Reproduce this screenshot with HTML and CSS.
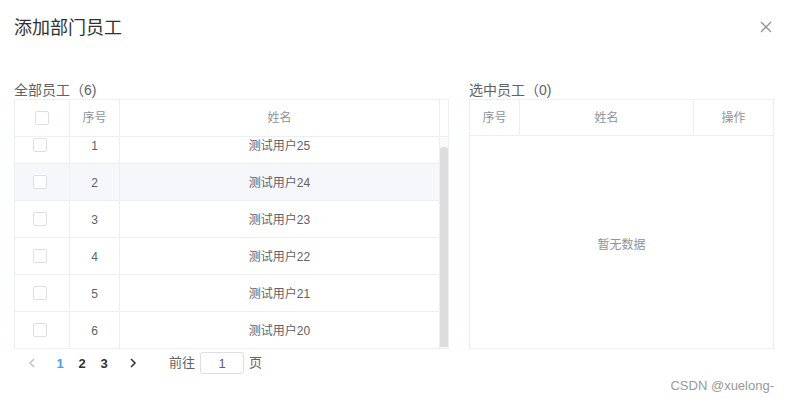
FILE: index.html
```html
<!DOCTYPE html>
<html lang="zh">
<head>
<meta charset="utf-8">
<title>添加部门员工</title>
<link rel="stylesheet" href="styles.css">
</head>
<body>
<div class="dialog">
  <header class="dlg-head">
    <h1 class="dlg-title">添加部门员工</h1>
    <button class="close" aria-label="关闭">
      <svg width="12" height="12" viewBox="0 0 12 12"><path d="M1 1L11 11M11 1L1 11" stroke="#909399" stroke-width="1.3" fill="none"/></svg>
    </button>
  </header>
  <div class="panels">
    <section class="panel left">
      <div class="panel-title">全部员工（6)</div>
      <div class="tbl">
        <div class="thead lt">
          <div class="th"><span class="cb"></span></div>
          <div class="th">序号</div>
          <div class="th">姓名</div>
          <div class="th gutter"></div>
        </div>
        <div class="tbody">
          <div class="rows">
            <div class="tr"><div class="td ck"><span class="cb"></span></div><div class="td">1</div><div class="td">测试用户25</div></div>
            <div class="tr hover"><div class="td ck"><span class="cb"></span></div><div class="td">2</div><div class="td">测试用户24</div></div>
            <div class="tr"><div class="td ck"><span class="cb"></span></div><div class="td">3</div><div class="td">测试用户23</div></div>
            <div class="tr"><div class="td ck"><span class="cb"></span></div><div class="td">4</div><div class="td">测试用户22</div></div>
            <div class="tr"><div class="td ck"><span class="cb"></span></div><div class="td">5</div><div class="td">测试用户21</div></div>
            <div class="tr"><div class="td ck"><span class="cb"></span></div><div class="td">6</div><div class="td">测试用户20</div></div>
          </div>
          <div class="scrollbar"><div class="thumb"></div></div>
        </div>
      </div>
      <nav class="pager">
        <span class="pg prev">
          <svg width="8" height="10" viewBox="0 0 8 10"><path d="M6 1L2 5L6 9" stroke="#C0C4CC" stroke-width="1.5" fill="none"/></svg>
        </span>
        <span class="pg num active">1</span>
        <span class="pg num">2</span>
        <span class="pg num">3</span>
        <span class="pg next">
          <svg width="8" height="10" viewBox="0 0 8 10"><path d="M2 1L6 5L2 9" stroke="#303133" stroke-width="1.5" fill="none"/></svg>
        </span>
        <span class="jump">前往</span>
        <span class="jump-input">1</span>
        <span class="jump-end">页</span>
      </nav>
    </section>
    <section class="panel right">
      <div class="panel-title">选中员工（0)</div>
      <div class="tbl">
        <div class="thead rt">
          <div class="th">序号</div>
          <div class="th">姓名</div>
          <div class="th">操作</div>
        </div>
        <div class="empty">暂无数据</div>
      </div>
    </section>
  </div>
  <div class="watermark">CSDN @xuelong-</div>
</div>
</body>
</html>
```
FILE: styles.css
```css
* { box-sizing: border-box; }
html, body { margin: 0; padding: 0; background: #fff; }
body {
  width: 789px;
  height: 402px;
  overflow: hidden;
  font-family: "Liberation Sans", "Noto Sans CJK SC", sans-serif;
  color: #606266;
}
.dialog { position: relative; width: 789px; height: 402px; }
.dlg-head {
  height: 56px;
  display: flex;
  align-items: center;
  justify-content: space-between;
  padding: 0 17px 0 14px;
}
.dlg-title {
  margin: 0;
  font-size: 18px;
  font-weight: normal;
  line-height: 24px;
  color: #303133;
}
.close {
  border: 0;
  background: none;
  padding: 0;
  width: 12px;
  height: 12px;
  display: flex;
  margin-top: -2px;
}
.panels {
  display: flex;
  gap: 20px;
  padding: 25px 16px 0 14px;
}
.panel.left { width: 435px; }
.panel.right { width: 305px; }
.panel-title {
  font-size: 14px;
  line-height: 18px;
  height: 18px;
  color: #606266;
}
.tbl {
  border: 1px solid #EBEEF5;
  font-size: 12px;
}
.thead {
  display: grid;
  border-bottom: 1px solid #EBEEF5;
  color: #909399;
}
.thead.lt { grid-template-columns: 55px 50px 320px 8px; height: 37px; }
.thead.rt { grid-template-columns: 50px 174px 79px; height: 36px; }
.th {
  display: flex;
  align-items: center;
  justify-content: center;
  border-right: 1px solid #EBEEF5;
  line-height: 16px;
}
.th:last-child { border-right: 0; }
.cb {
  display: block;
  width: 14px;
  height: 14px;
  border: 1px solid #DCDFE6;
  border-radius: 2px;
  background: #fff;
}
.tbody {
  display: flex;
  height: 211px;
}
.rows {
  width: 425px;
  display: flex;
  flex-direction: column;
  justify-content: flex-end;
  overflow: hidden;
}
.tr {
  flex: none;
  display: grid;
  grid-template-columns: 55px 50px 320px;
  height: 37px;
  border-bottom: 1px solid #EBEEF5;
}
.tr:last-child { border-bottom: 0; height: 36px; }
.tr.hover { background: #F5F7FA; }
.td {
  display: flex;
  align-items: center;
  justify-content: center;
  border-right: 1px solid #EBEEF5;
  line-height: 16px;
  padding-top: 1px;
  color: #606266;
}
.td.ck { padding-right: 4px; padding-top: 0; }
.scrollbar {
  width: 8px;
  background: #fafafa;
  padding-top: 10px;
}
.thumb {
  width: 8px;
  height: 200px;
  background: #dddddd;
  border-radius: 3px 3px 0 0;
}
.empty {
  height: 212px;
  display: flex;
  align-items: center;
  justify-content: center;
  color: #909399;
  font-size: 12px;
  padding-top: 2px;
}
.pager {
  display: flex;
  align-items: center;
  height: 24px;
  margin-top: 2px;
  font-size: 13px;
}
.pg {
  display: flex;
  align-items: center;
  justify-content: center;
  height: 24px;
}
.prev { width: 35px; }
.num { width: 22px; font-weight: bold; color: #303133; }
.num.active { color: #409EFF; }
.next { width: 36px; }
.jump { margin-left: 18px; color: #606266; line-height: 16px; }
.jump-input {
  margin-left: 5px;
  width: 44px;
  height: 22px;
  border: 1px solid #DCDFE6;
  border-radius: 3px;
  display: flex;
  align-items: center;
  justify-content: center;
  color: #606266;
}
.jump-end { margin-left: 5px; color: #606266; line-height: 16px; }
.watermark {
  position: absolute;
  right: 15px;
  bottom: 9px;
  font-size: 13px;
  color: #999;
  font-family: "Liberation Sans", sans-serif;
}
```
